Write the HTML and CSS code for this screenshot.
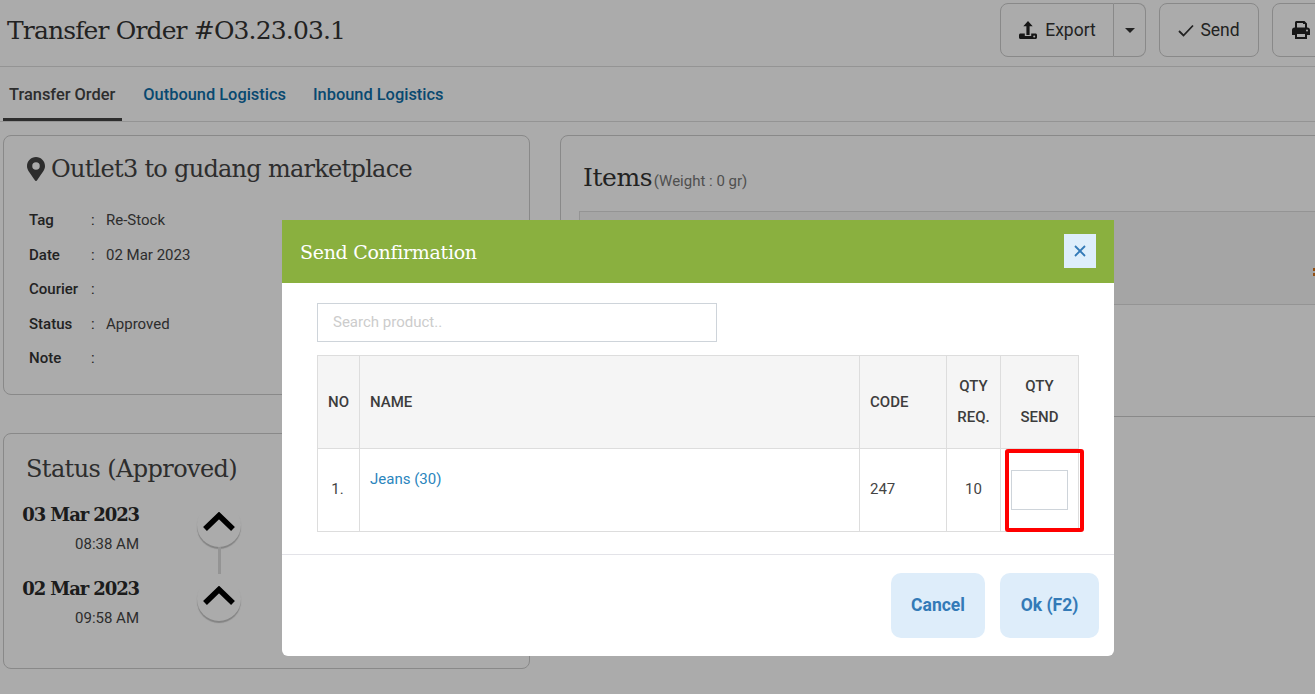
FILE: index.html
```html
<!DOCTYPE html>
<html lang="en">
<head>
<meta charset="utf-8">
<title>Transfer Order</title>
<link rel="stylesheet" href="styles.css">
</head>
<body>
<div class="page">
  <header class="topbar">
    <h1 class="page-title">Transfer Order #O3.23.03.1</h1>
    <div class="actions">
      <div class="split">
        <button class="btn btn-main"><svg class="ico-export" viewBox="0 0 18 18"><path d="M9 0l4.700 5.200h-3.100V14H7.400V5.200H4.300z"/><path d="M1.500 12.500h4.300V15h6.400v-2.500h4.300c.8 0 1.500.7 1.500 1.500v2.500c0 .8-.7 1.500-1.500 1.500h-15C.7 18 0 17.300 0 16.500V14c0-.8.7-1.500 1.500-1.500z"/><circle cx="15.200" cy="15.500" r="1" fill="#fff"/></svg><span>Export</span></button>
        <button class="btn btn-caret"><svg class="ico-caret" viewBox="0 0 10 5"><path d="M0 0h10L5 5z"/></svg></button>
      </div>
      <button class="btn btn-send"><svg class="ico-check" viewBox="0 0 16 13"><path d="M1 7l4.500 4.500L15 1.500" fill="none" stroke="currentColor" stroke-width="1.800"/></svg><span>Send</span></button>
      <button class="btn btn-print"><svg class="ico-print" viewBox="0 0 18 18"><path d="M3 7V1.500C3 .7 3.700 0 4.500 0h8L15 2.500V7h-2V3h-2V2H5v5z"/><path d="M2.500 6.500h13c1.400 0 2.500 1.100 2.500 2.500v5h-3v4H3v-4H0V9c0-1.400 1.100-2.500 2.500-2.500zM5 13v3h8v-3z"/><circle cx="15" cy="9.500" r="1" fill="#fff"/></svg></button>
    </div>
  </header>

  <nav class="tabs">
    <a class="tab tab-active">Transfer Order</a>
    <a class="tab tab-outbound">Outbound Logistics</a>
    <a class="tab">Inbound Logistics</a>
  </nav>

  <main class="content">
    <div class="col-left">
      <section class="card card-info">
        <h2 class="card-title"><svg class="ico-pin" viewBox="0 0 384 512"><path d="M172 502C27 291 0 267 0 192 0 86 86 0 192 0s192 86 192 192c0 75-27 99-172 310-10 14-30 14-40 0zm20-230a80 80 0 100-160 80 80 0 000 160z"/></svg>Outlet3 to gudang marketplace</h2>
        <dl class="info">
          <dt>Tag</dt><dd>Re-Stock</dd>
          <dt>Date</dt><dd>02 Mar 2023</dd>
          <dt>Courier</dt><dd></dd>
          <dt>Status</dt><dd>Approved</dd>
          <dt>Note</dt><dd></dd>
        </dl>
      </section>
      <section class="card card-status">
        <h2 class="card-title status-title">Status (Approved)</h2>
        <div class="timeline">
          <div class="event">
            <div class="when"><strong>03 Mar 2023</strong><span>08:38 AM</span></div>
            <div class="dot"><svg viewBox="0 0 34 20"><path d="M3 17L17 3.500 31 17" fill="none" stroke="#000" stroke-width="5.500"/></svg></div>
          </div>
          <div class="event event-last">
            <div class="when"><strong>02 Mar 2023</strong><span>09:58 AM</span></div>
            <div class="dot"><svg viewBox="0 0 34 20"><path d="M3 17L17 3.500 31 17" fill="none" stroke="#000" stroke-width="5.500"/></svg></div>
          </div>
        </div>
      </section>
    </div>
    <section class="card card-items">
      <h2 class="items-title">Items <small>(Weight : 0 gr)</small></h2>
      <div class="items-box">
        <div class="items-head"><span class="clipped"></span></div>
      </div>
    </section>
  </main>
</div>

<div class="overlay"></div>

<div class="modal">
  <div class="modal-head">
    <h3 class="modal-title">Send Confirmation</h3>
    <button class="modal-close"><svg viewBox="0 0 12 12"><path d="M1 1l10 10M11 1L1 11" stroke="currentColor" stroke-width="1.800" fill="none"/></svg></button>
  </div>
  <div class="modal-body">
    <input class="search" type="text" placeholder="Search product..">
    <table class="grid">
      <thead>
        <tr>
          <th class="c-no">NO</th>
          <th class="c-name">NAME</th>
          <th class="c-code">CODE</th>
          <th class="c-req">QTY<br>REQ.</th>
          <th class="c-send">QTY<br>SEND</th>
        </tr>
      </thead>
      <tbody>
        <tr>
          <td class="c-no">1.</td>
          <td class="c-name cell-top"><a class="product">Jeans (30)</a></td>
          <td class="c-code">247</td>
          <td class="c-req">10</td>
          <td class="c-send cell-send"><input class="qty" type="text"><span class="highlight"></span></td>
        </tr>
      </tbody>
    </table>
  </div>
  <div class="modal-foot">
    <button class="foot-btn btn-cancel">Cancel</button>
    <button class="foot-btn btn-ok">Ok (F2)</button>
  </div>
</div>
</body>
</html>
```

FILE: styles.css
```css
* { box-sizing: border-box; }
html, body { margin: 0; height: 694px; overflow: hidden; }
body {
  position: relative;
  width: 1315px;
  background: #fff;
  color: #333;
  font-family: Roboto, "Liberation Sans", sans-serif;
  font-size: 15px;
}
.page { width: 1315px; height: 694px; overflow: hidden; }

.topbar {
  display: flex;
  justify-content: space-between;
  height: 67px;
  border-bottom: 1px solid #ddd;
  padding: 3px 0 0 7px;
  width: 1400px;
}
.page-title {
  margin: 0;
  padding-top: 11px;
  font-family: "DejaVu Serif", serif;
  font-weight: 400;
  font-size: 25px;
  line-height: 34px;
  letter-spacing: -0.850px;
}
.actions { display: flex; gap: 13px; height: 54px; width: 400px; }
.btn {
  font-family: inherit;
  font-size: 17.500px;
  color: #333;
  background: transparent;
  border: 1px solid #ccc;
  border-radius: 8px;
  display: flex;
  align-items: center;
  justify-content: center;
  padding: 0;
}
.split { display: flex; }
.btn-main { width: 114px; border-radius: 8px 0 0 8px; gap: 8px; padding-left: 1px; }
.btn-caret { width: 32px; border-left: 0; border-radius: 0 8px 8px 0; }
.btn-send { width: 100px; gap: 6px; }
.btn-print { width: 100px; justify-content: flex-start; padding-left: 19px; }
.ico-export { width: 18px; height: 18px; fill: #222; }
.ico-caret { width: 10px; height: 5px; fill: #333; }
.ico-check { width: 16px; height: 13px; }
.ico-print { width: 18px; height: 18px; fill: #222; }

.tabs {
  display: flex;
  height: 55px;
  border-bottom: 1px solid #ddd;
  padding-left: 3px;
}
.tab {
  display: block;
  height: 54px;
  padding: 18px 6px 0;
  margin-right: 16px;
  font-size: 16.400px;
  font-weight: 500;
  line-height: 20px;
  color: #0d6ea8;
  text-decoration: none;
}
.tab-active { color: #444; border-bottom: 3px solid #444; margin-right: 15px; padding-right: 7px; }
.tab-outbound { margin-right: 15px; }

.content {
  display: grid;
  grid-template-columns: 527px 800px;
  column-gap: 30px;
  padding: 13px 0 0 3px;
  align-items: start;
}
.col-left { display: flex; flex-direction: column; gap: 38px; }
.card { border: 1px solid #ccc; border-radius: 8px; }
.card-info { height: 260px; padding: 15px 0 0 23px; }
.card-status { height: 236px; padding: 17px 0 0 20px; }
.card-title {
  margin: 0;
  display: flex;
  align-items: center;
  gap: 6px;
  font-family: "DejaVu Serif", serif;
  font-weight: 400;
  font-size: 24px;
  line-height: 36px;
  letter-spacing: -0.720px;
  color: #444;
}
.ico-pin { width: 18px; height: 24px; fill: #444; }
.status-title { padding-left: 2px; letter-spacing: -0.600px; }

.info {
  margin: 16px 0 0 2px;
  display: grid;
  grid-template-columns: 62px 1fr;
  grid-auto-rows: 34.500px;
  align-items: center;
}
.info dt { font-weight: 500; color: #333; position: relative; }
.info dt::after { content: ":"; font-weight: 400; position: absolute; left: 62px; top: 0; }
.info dd { margin: 0 0 0 15px; color: #444; }

.timeline { margin-top: 12px; }
.event {
  display: flex;
  align-items: flex-start;
  height: 74px;
  position: relative;
}
.event::after {
  content: "";
  position: absolute;
  left: 194px;
  top: 48px;
  width: 3px;
  height: 27px;
  background: #ddd;
}
.event-last::after { display: none; }
.when {
  width: 115px;
  display: flex;
  flex-direction: column;
  align-items: flex-end;
}
.when strong {
  font-family: "DejaVu Serif", serif;
  font-size: 18px;
  line-height: 32px;
  letter-spacing: -1.100px;
  color: #2a2a2a;
  white-space: nowrap;
}
.when span { font-size: 15px; line-height: 18px; margin-top: 4px; color: #444; white-space: nowrap; }
.dot {
  margin: 4px 0 0 58px;
  width: 44px;
  height: 44px;
  border-radius: 50%;
  box-shadow: 0 2px 1px #c4c4c4;
  position: relative;
}
.dot svg { display: block; width: 34px; height: 20px; position: absolute; left: 5px; top: 9px; }

.card-items { height: 282px; padding: 19px 0 0 18px; }
.items-title {
  display: block;
  height: 46px;
  margin: 0;
  font-family: "DejaVu Serif", serif;
  font-weight: 400;
  font-size: 25px;
  line-height: 46px;
  letter-spacing: -0.400px;
  color: #333;
  padding-left: 4px;
}
.items-title small {
  font-family: Roboto, sans-serif;
  font-size: 15px;
  letter-spacing: 0;
  color: #777;
  margin-left: -6px;
}
.items-box { margin-top: 10px; border-left: 1px solid #ddd; }
.items-head { position: relative; height: 94px; background: #f7f7f7; border-top: 1px solid #ddd; border-bottom: 1px solid #ddd; }
.clipped {
  position: absolute;
  left: 733px;
  top: 56px;
  width: 2px;
  height: 8px;
  border-top: 3px solid #d9761f;
  border-bottom: 3px solid #d9761f;
}

.overlay { position: absolute; inset: 0; background: rgba(0, 0, 0, 0.33); }

.modal {
  position: absolute;
  left: 282px;
  top: 220px;
  width: 832px;
  height: 436px;
  background: #fff;
  border-radius: 0 0 6px 6px;
  display: flex;
  flex-direction: column;
}
.modal-head {
  height: 63px;
  background: #8ab03f;
  display: flex;
  align-items: center;
  justify-content: space-between;
  padding: 0 18px;
}
.modal-title {
  margin: 0;
  font-family: "DejaVu Serif", serif;
  font-weight: 400;
  font-size: 19px;
  letter-spacing: -0.300px;
  color: #fff;
}
.modal-close {
  width: 32px;
  height: 34px;
  margin-bottom: 2px;
  border: 0;
  padding: 0;
  background: #deeefb;
  color: #337ab7;
  display: flex;
  align-items: center;
  justify-content: center;
}
.modal-close svg { width: 12px; height: 12px; }

.modal-body { height: 272px; padding: 20px 35px 0; border-bottom: 1px solid #e3e3e8; }
.search {
  display: block;
  width: 400px;
  height: 39px;
  padding: 0 15px 2px;
  border: 1px solid #ced4da;
  border-radius: 0;
  font-family: inherit;
  font-size: 15px;
  outline: 0;
}
.search::placeholder { color: #ccc; opacity: 1; }

.grid {
  margin-top: 13px;
  width: 761px;
  table-layout: fixed;
  border-collapse: collapse;
  color: #444;
}
.grid th, .grid td { border: 1px solid #ddd; padding: 0 10px; text-align: left; }
.grid th {
  height: 93px;
  background: #f5f5f5;
  font-weight: 500;
  line-height: 31px;
  color: #3d3d3d;
}
.grid td { height: 83px; padding-bottom: 2px; }
.c-no { width: 42px; }
.c-name { width: 500px; }
.c-code { width: 87px; }
.c-req { width: 54px; }
.c-send { width: 78px; }
.grid .c-req, .grid .c-send { text-align: center; padding-left: 0; padding-right: 0; }
.grid td.c-no { text-align: center; padding-left: 0; padding-right: 2px; }
.grid td.cell-top { vertical-align: top; padding-top: 21px; line-height: 18px; }
.product { color: #2a85bd; }
.cell-send { position: relative; }
.qty {
  display: block;
  width: 57px;
  height: 40px;
  margin: 0 auto;
  padding: 0;
  border: 1px solid #ced4da;
  position: relative;
  top: 1px;
  outline: 0;
}
.highlight {
  position: absolute;
  left: 4px;
  right: -6px;
  top: 0;
  bottom: -1px;
  border: 4px solid #f00;
  border-radius: 3px;
}

.modal-foot {
  flex: 1;
  display: flex;
  justify-content: flex-end;
  align-items: flex-start;
  gap: 15px;
  padding: 18px 15px 0 0;
}
.foot-btn {
  height: 65px;
  border: 0;
  border-radius: 10px;
  background: #deedfa;
  color: #337ab7;
  font-family: inherit;
  font-size: 17.500px;
  font-weight: 700;
  padding: 0 0 2px;
}
.btn-cancel { width: 94px; }
.btn-ok { width: 99px; }
```
